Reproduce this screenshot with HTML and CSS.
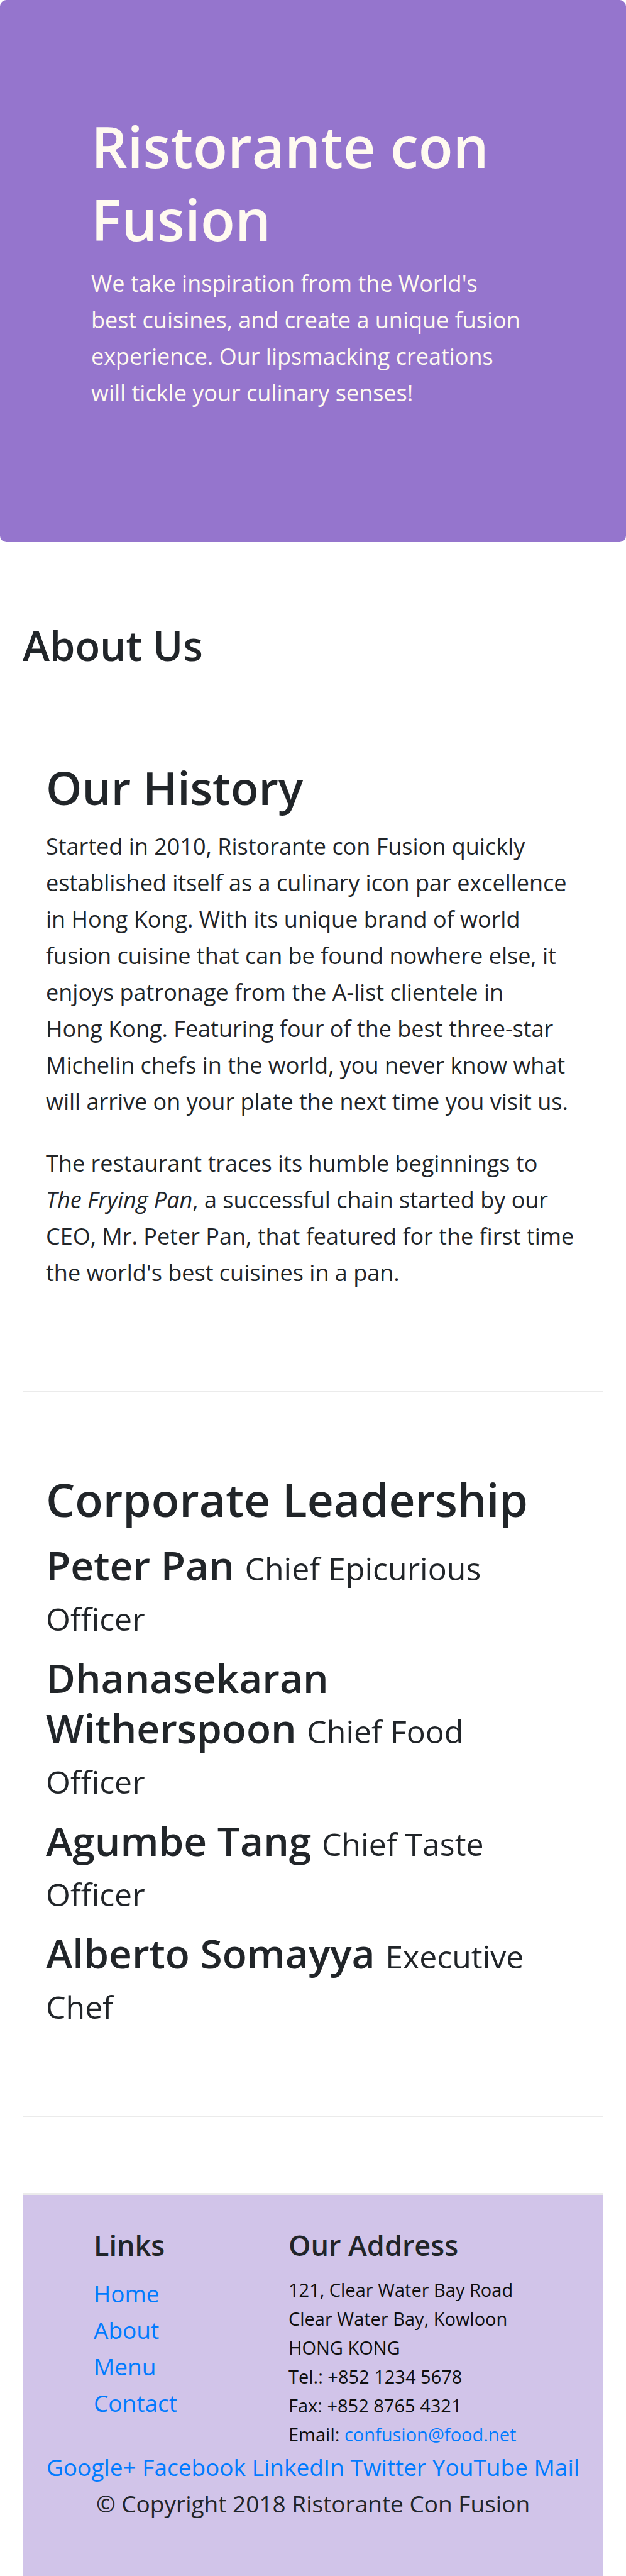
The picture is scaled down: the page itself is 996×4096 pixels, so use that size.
FILE: index.html
```html
<!DOCTYPE html>
<html lang="en">
<head>
<meta charset="utf-8">
<title>Ristorante Con Fusion: About Us</title>
<link rel="stylesheet" href="styles.css">
</head>
<body>
<header class="jumbotron">
  <h1 class="site-title">Ristorante con Fusion</h1>
  <p class="lead">We take inspiration from the World's<br> best cuisines, and create a unique fusion<br> experience. Our lipsmacking creations<br> will tickle your culinary senses!</p>
</header>
<main class="container">
  <h3 class="page-title">About Us</h3>
  <section class="row-content">
    <h2 class="section-title">Our History</h2>
    <p class="text">Started in 2010, Ristorante con Fusion quickly<br> established itself as a culinary icon par excellence<br> in Hong Kong. With its unique brand of world<br> fusion cuisine that can be found nowhere else, it<br> enjoys patronage from the A-list clientele in<br> Hong Kong. Featuring four of the best three-star<br> Michelin chefs in the world, you never know what<br> will arrive on your plate the next time you visit us.</p>
    <p class="text">The restaurant traces its humble beginnings to<br> <em>The Frying Pan</em>, a successful chain started by our<br> CEO, Mr. Peter Pan, that featured for the first time<br> the world's best cuisines in a pan.</p>
  </section>
  <section class="row-content leadership">
    <h2 class="section-title">Corporate Leadership</h2>
    <h3 class="person">Peter Pan <small class="role">Chief Epicurious<br> Officer</small></h3>
    <h3 class="person">Dhanasekaran<br> Witherspoon <small class="role">Chief Food<br> Officer</small></h3>
    <h3 class="person">Agumbe Tang <small class="role">Chief Taste<br> Officer</small></h3>
    <h3 class="person">Alberto Somayya <small class="role">Executive<br> Chef</small></h3>
  </section>
</main>
<footer class="footer">
  <div class="footer-columns">
    <nav class="footer-links">
      <h5 class="footer-title">Links</h5>
      <ul class="link-list">
        <li><a href="#">Home</a></li>
        <li><a href="#">About</a></li>
        <li><a href="#">Menu</a></li>
        <li><a href="#">Contact</a></li>
      </ul>
    </nav>
    <div class="footer-address">
      <h5 class="footer-title">Our Address</h5>
      <address class="address">
        121, Clear Water Bay Road<br>
        Clear Water Bay, Kowloon<br>
        HONG KONG<br>
        Tel.: +852 1234 5678<br>
        Fax: +852 8765 4321<br>
        Email: <a href="mailto:confusion@food.net">confusion@food.net</a>
      </address>
    </div>
  </div>
  <div class="social">
    <a href="#">Google+</a>
    <a href="#">Facebook</a>
    <a href="#">LinkedIn</a>
    <a href="#">Twitter</a>
    <a href="#">YouTube</a>
    <a href="#">Mail</a>
  </div>
  <p class="copyright">© Copyright 2018 Ristorante Con Fusion</p>
</footer>
</body>
</html>
```
FILE: styles.css
```css
* {
  box-sizing: border-box;
}

body {
  margin: 0;
  background: #fff;
  color: #212529;
  font-family: "Open Sans", "Noto Sans", sans-serif;
  font-size: 37px;
  line-height: 58px;
}

h1, h2, h3, h5, p, ul {
  margin: 0;
  padding: 0;
  font-weight: 600;
}

p, ul {
  font-weight: 400;
}

a {
  color: #007bff;
  text-decoration: none;
}

.jumbotron {
  padding: 174px 145px 208px;
  border-radius: 10px;
  background: #9575cd;
  color: #fffaf0;
}

.site-title {
  margin-bottom: 16px;
  font-size: 90px;
  line-height: 116px;
}

.lead,
.text {
  font-size: 36px;
}

.container {
  padding: 124px 36px 0;
}

.page-title {
  font-size: 65px;
  line-height: 80px;
}

.row-content {
  padding: 140px 24px 158px 37px;
  border-bottom: 2px solid #ebebeb;
}

.leadership {
  padding-top: 125px;
  padding-bottom: 138px;
}

.section-title {
  margin-bottom: 19px;
  font-size: 73px;
  line-height: 92px;
}

.text + .text {
  margin-top: 40px;
}

.person {
  font-size: 64px;
  line-height: 80px;
}

.person + .person {
  margin-top: 19px;
}

.role {
  font-size: 50px;
  font-weight: 400;
  line-height: 1;
}

.footer {
  margin: 121px 36px 0;
  padding: 51px 36px 86px;
  border-top: 3px solid #ebebeb;
  background: #d1c4e9;
  background-clip: padding-box;
}

.footer-columns {
  display: grid;
  grid-template-columns: 2fr 3fr;
  padding-left: 77px;
}

.footer-title {
  margin-bottom: 19px;
  font-size: 45px;
  line-height: 58px;
}

.link-list {
  list-style: none;
}

.address {
  color: #0f0f0f;
  font-size: 29px;
  font-style: normal;
  line-height: 46px;
}

.social,
.copyright {
  text-align: center;
}
```
